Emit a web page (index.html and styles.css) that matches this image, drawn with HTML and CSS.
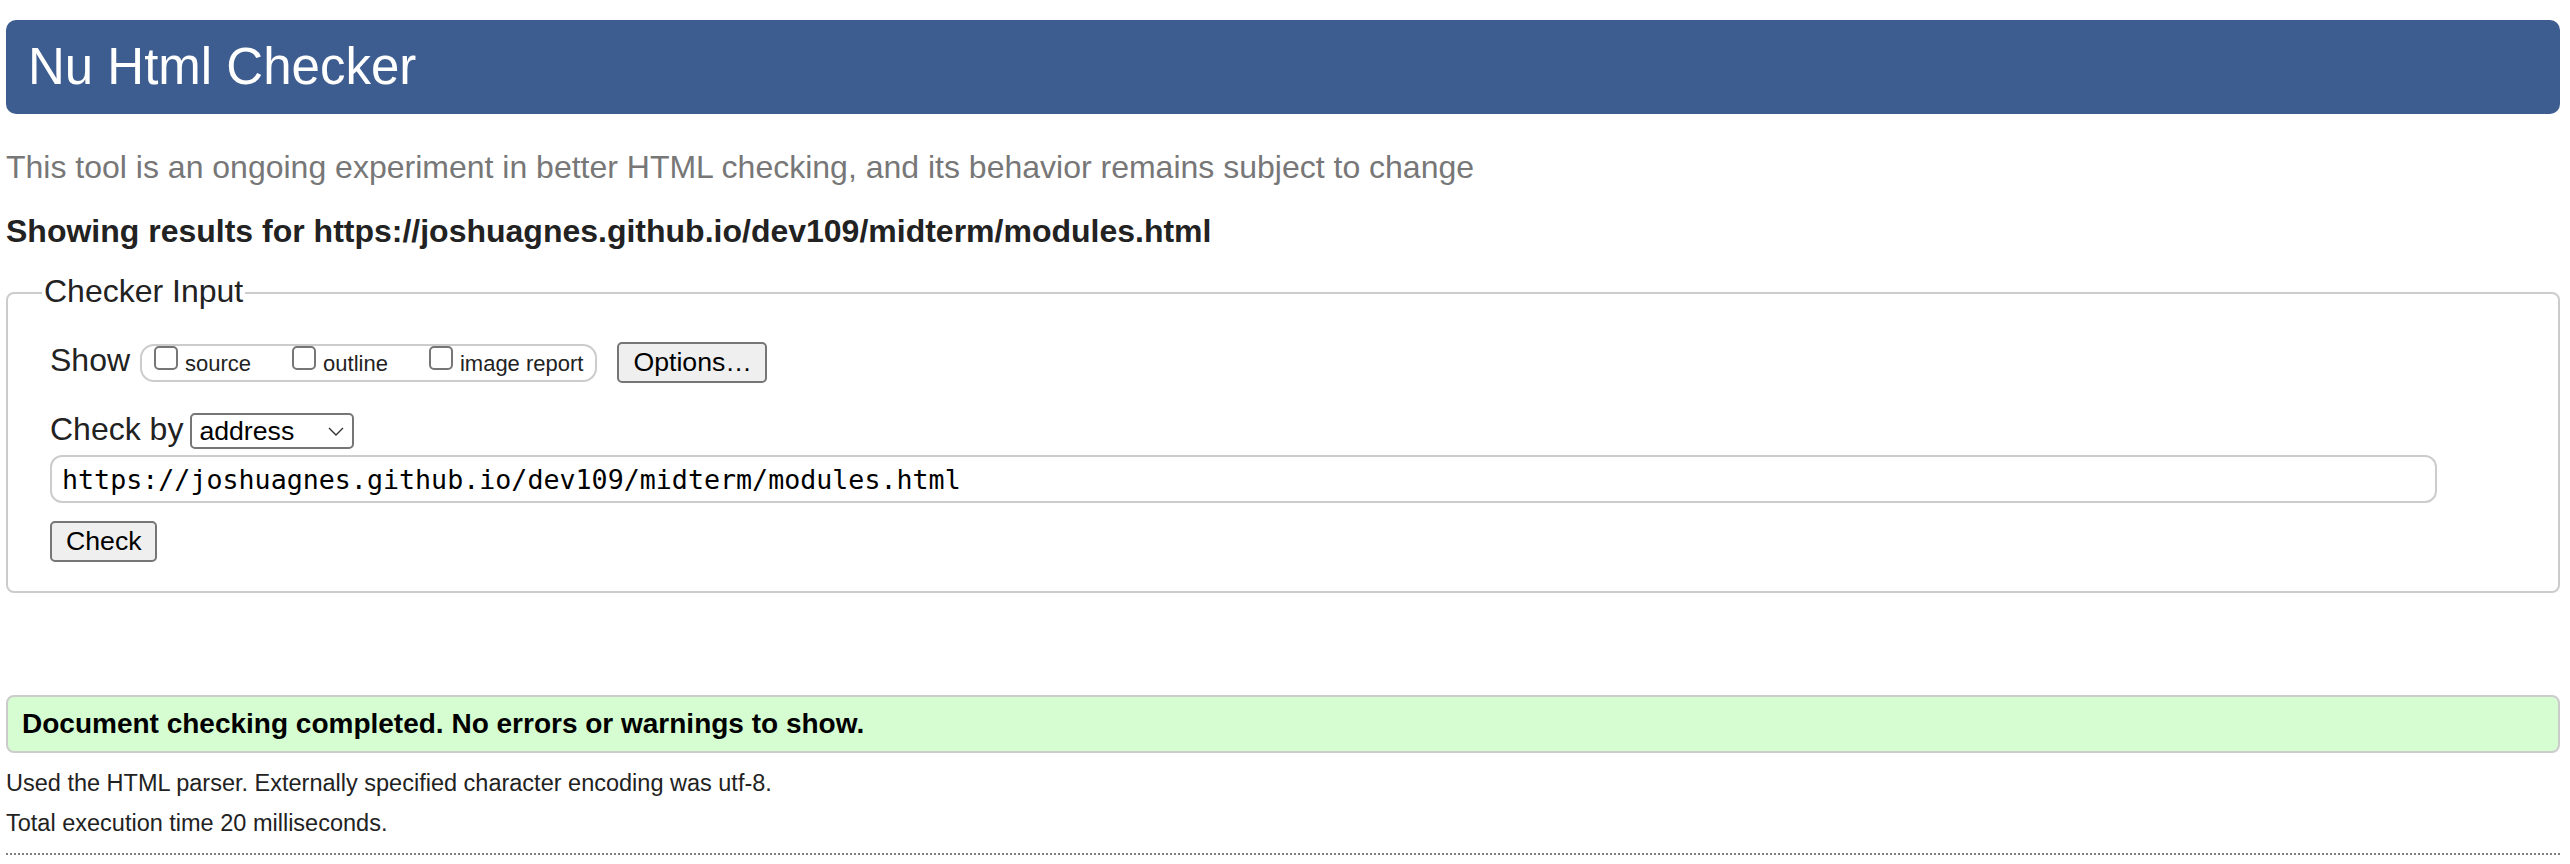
FILE: index.html
```html
<!DOCTYPE html>
<html lang="en">
<head>
<meta charset="utf-8">
<title>Showing results for https://joshuagnes.github.io/dev109/midterm/modules.html - Nu Html Checker</title>
<link rel="stylesheet" href="styles.css">
</head>
<body>
<header class="banner"><h1 class="title">Nu Html Checker</h1></header>
<p class="tagline">This tool is an ongoing experiment in better HTML checking, and its behavior remains subject to change</p>
<p class="showing">Showing results for https://joshuagnes.github.io/dev109/midterm/modules.html</p>
<form class="checker" onsubmit="return false">
  <fieldset class="checker-fs">
    <legend class="checker-legend">Checker Input</legend>
    <div class="fs-body">
      <div class="row row-show">
        <span class="row-label label-show">Show</span>
        <span class="opts-group">
          <label class="opt"><input type="checkbox" class="cb"><span class="opt-text">source</span></label>
          <label class="opt"><input type="checkbox" class="cb"><span class="opt-text">outline</span></label>
          <label class="opt"><input type="checkbox" class="cb"><span class="opt-text">image report</span></label>
        </span>
        <button type="button" class="btn btn-options">Options…</button>
      </div>
      <div class="row row-by">
        <span class="row-label label-by">Check by</span>
        <select class="by-select"><option>address</option></select>
      </div>
      <input class="url-input" type="text" value="https://joshuagnes.github.io/dev109/midterm/modules.html">
      <button type="button" class="btn btn-check">Check</button>
    </div>
  </fieldset>
</form>
<div class="success"><p class="success-text">Document checking completed. No errors or warnings to show.</p></div>
<p class="details details-first">Used the HTML parser. Externally specified character encoding was utf-8.</p>
<p class="details">Total execution time 20 milliseconds.</p>
<hr class="end-rule">
</body>
</html>
```

FILE: styles.css
```css
html, body {
  background: #ffffff;
}

body {
  margin: 0;
  padding: 20px 10px 0 6px;
  font-family: "Liberation Sans", Arial, Helvetica, sans-serif;
  color: #222222;
}

.banner {
  height: 94px;
  box-sizing: border-box;
  background: #3d5c8f;
  border-radius: 10px;
  display: flex;
  align-items: center;
  padding-left: 22px;
}

.title {
  margin: 0;
  font-size: 51px;
  font-weight: normal;
  line-height: 58px;
  color: #ffffff;
}

.tagline {
  margin: 33px 0 0;
  font-size: 32px;
  line-height: 40px;
  color: #777777;
}

.showing {
  margin: 24px 0 20px;
  font-size: 32px;
  line-height: 40px;
  font-weight: bold;
  color: #222222;
}

.checker {
  margin: 0;
}

.checker-fs {
  margin: 0;
  border: 2px solid #cccccc;
  border-radius: 8px;
  padding: 27px 0 29px 34px;
  min-width: 0;
}

.checker-legend {
  padding: 0 2px 4px;
  font-size: 32px;
  line-height: 40px;
  color: #222222;
}

.fs-body {
  padding-left: 8px;
}

.row {
  display: flex;
  align-items: center;
}

.row-show {
  height: 41px;
}

.row-by {
  margin-top: 30px;
  height: 36px;
}

.row-label {
  font-size: 32px;
  line-height: 32px;
  color: #222222;
}

.label-show {
  margin-bottom: 6px;
}

.label-by {
  margin-bottom: 4px;
}

.opts-group {
  margin-left: 10px;
  height: 38px;
  box-sizing: border-box;
  border: 2px solid #cccccc;
  border-radius: 14px;
  padding: 0 12px 0 12px;
  display: flex;
  align-items: flex-start;
  gap: 41px;
}

.opt {
  display: flex;
  align-items: flex-start;
}

.cb {
  appearance: none;
  -webkit-appearance: none;
  margin: 0 7px 0 0;
  width: 24px;
  height: 24px;
  box-sizing: border-box;
  border: 2px solid #767676;
  border-radius: 5px;
  background: #ffffff;
}

.opt-text {
  margin-top: 7px;
  font-size: 22px;
  line-height: 22px;
  color: #222222;
}

.btn {
  font-family: "Liberation Sans", Arial, Helvetica, sans-serif;
  font-size: 26.67px;
  color: #000000;
  background: #efefef;
  border: 2px solid #767676;
  border-radius: 5px;
  height: 41px;
  box-sizing: border-box;
  padding: 0 14px;
  line-height: 1;
}

.btn-options {
  margin-left: 20px;
  width: 150px;
}

.by-select {
  margin-left: 7px;
  appearance: none;
  -webkit-appearance: none;
  width: 164px;
  height: 36px;
  box-sizing: border-box;
  border: 2px solid #767676;
  border-radius: 5px;
  padding: 0 0 0 7px;
  font-family: "Liberation Sans", Arial, Helvetica, sans-serif;
  font-size: 26.67px;
  color: #000000;
  background-color: #ffffff;
  background-image: url("data:image/svg+xml;utf8,<svg xmlns='http://www.w3.org/2000/svg' width='16' height='9' viewBox='0 0 16 9'><path d='M1 1 L8 8 L15 1' fill='none' stroke='%23333333' stroke-width='1.4'/></svg>");
  background-repeat: no-repeat;
  background-position: right 8px center;
}

.url-input {
  display: block;
  margin-top: 6px;
  width: 2387px;
  height: 48px;
  box-sizing: border-box;
  border: 2px solid #cccccc;
  border-radius: 12px;
  padding: 0 10px;
  font-family: "DejaVu Sans Mono", "Liberation Mono", monospace;
  font-size: 26.67px;
  color: #000000;
  background: #ffffff;
  outline: none;
}

.btn-check {
  display: block;
  margin-top: 18px;
  width: 107px;
}

.success {
  margin-top: 102px;
  height: 58px;
  box-sizing: border-box;
  background: #d6fdd1;
  border: 2px solid #cccccc;
  border-radius: 8px;
  padding-left: 14px;
  display: flex;
  align-items: center;
}

.success-text {
  margin: 0;
  font-size: 28px;
  line-height: 34px;
  font-weight: bold;
  color: #000000;
}

.details {
  margin: 12px 0 0;
  font-size: 23.5px;
  line-height: 28px;
  color: #222222;
}

.details-first {
  margin-top: 16px;
}

.end-rule {
  margin: 16px 0 0;
  height: 0;
  border: 0;
  border-top: 2px dotted #808080;
}
```
